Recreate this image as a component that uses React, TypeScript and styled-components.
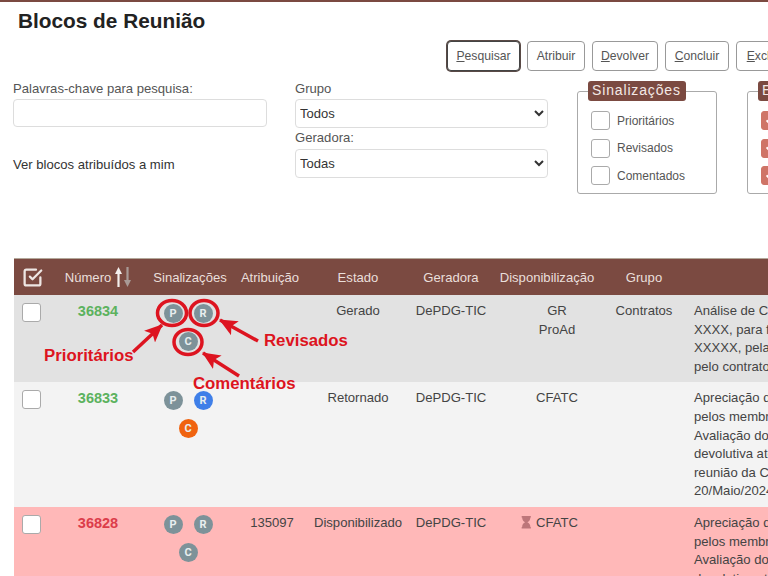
import styled, { createGlobalStyle } from "styled-components";
import { FiCheckSquare } from "react-icons/fi";
import { FaCheck, FaHourglass } from "react-icons/fa";

const brown = "#7b4a41";

const GlobalStyle = createGlobalStyle`
  html, body {
    margin: 0;
    height: 100%;
    overflow: hidden;
    background: #fff;
  }
  body {
    font-family: "Liberation Sans", Arial, sans-serif;
    font-size: 13.1px;
    color: #444;
  }
`;

const Page = styled.div`
  position: relative;
  width: 768px;
  height: 576px;
  overflow: hidden;
  border-top: 2px solid ${brown};
  box-sizing: border-box;
`;
const Title = styled.h1`
  margin: 0;
  padding: 7px 0 0 18px;
  height: 24px;
  font-size: 20.8px;
  line-height: 24px;
  font-weight: bold;
  color: #222;
`;
const Toolbar = styled.div`
  display: flex;
  gap: 7px;
  margin: 8px 0 10px 447px;
  height: 30px;
`;
const Button = styled.button<{ $active?: boolean; $w: number }>`
  flex: none;
  width: ${(p) => p.$w}px;
  height: 30px;
  padding: 0;
  font-family: inherit;
  font-size: 12.2px;
  color: #555;
  background: #fff;
  border: 1px solid ${(p) => (p.$active ? "#444" : "#999")};
  border-radius: 4px;
  box-shadow: ${(p) => (p.$active ? "0 0 0 1px #5a4a46" : "none")};

  u {
    text-decoration: underline;
  }
`;
const FormRow = styled.div`
  display: flex;
  padding-left: 13px;
  height: 113px;
`;
const LeftCol = styled.div`
  width: 254px;
  margin-right: 28px;
`;
const MidCol = styled.div`
  width: 253px;
  margin-right: 29px;
`;
const Label = styled.div`
  height: 16px;
  line-height: 16px;
  margin-bottom: 2px;
  color: #555;
`;
const GeraLabel = styled(Label)`
  margin: 2px 0 3px;
`;
const SearchInput = styled.input`
  display: block;
  width: 254px;
  height: 28px;
  box-sizing: border-box;
  border: 1px solid #ddd;
  border-radius: 4px;
  background: #fff;
`;
const MineLabel = styled.div`
  margin-top: 30px;
  line-height: 16px;
  color: #333;
`;
const Select = styled.select`
  display: block;
  width: 253px;
  height: 29px;
  box-sizing: border-box;
  padding: 0;
  font-family: inherit;
  font-size: 13px;
  color: #333;
  background: #fff;
  border: 1px solid #ddd;
  border-radius: 4px;
`;
const Group = styled.fieldset<{ $w: number }>`
  flex: none;
  box-sizing: border-box;
  width: ${(p) => p.$w}px;
  height: 113px;
  margin: 0 30px 0 0;
  padding: 10px 10px 0 13px;
  border: 1px solid #aaa;
  border-radius: 3px;

  legend {
    height: 20px;
    padding: 0 5px 0 4px;
    margin-left: -3px;
    line-height: 19px;
    font-size: 14px;
    letter-spacing: 0.85px;
    color: #f3e9e6;
    background: ${brown};
    border-radius: 3px;
  }
`;
const CheckRow = styled.div`
  display: flex;
  align-items: center;
  gap: 7px;
  box-sizing: border-box;
  height: 19px;
  margin-bottom: 8.5px;
  font-size: 12px;
  color: #555;
`;
const Box = styled.span<{ $on?: boolean }>`
  flex: none;
  display: flex;
  align-items: center;
  justify-content: center;
  width: 19px;
  height: 19px;
  box-sizing: border-box;
  color: #fff;
  font-size: 10px;
  border: 1px solid ${(p) => (p.$on ? "#cf7467" : "#aaa")};
  border-radius: 3px;
  background: ${(p) => (p.$on ? "#cf7467" : "#fff")};
`;
const Table = styled.table`
  table-layout: fixed;
  width: 1072px;
  margin: 64px 0 0 14px;
  border-collapse: separate;
  border-spacing: 0;
`;
const Th = styled.th<{ $w: number }>`
  width: ${(p) => p.$w}px;
  height: 36px;
  padding: 0;
  font-size: 13.1px;
  font-weight: normal;
  text-align: center;
  color: #eadfdb;
  background: ${brown};
  border-top: 1px solid #b3a89a;

  svg {
    vertical-align: middle;
  }
`;
const CheckAll = styled(FiCheckSquare)`
  stroke-width: 2.6;
  color: #eee6e3;
`;
const SortHead = styled.span`
  display: inline-flex;
  align-items: center;
  gap: 4px;
`;
const Tr = styled.tr<{ $bg: string }>`
  background: ${(p) => p.$bg};
`;
const Td = styled.td<{ $left?: boolean }>`
  padding: ${(p) => (p.$left ? "7px 0 6px 8px" : "7px 0 6px")};
  vertical-align: top;
  line-height: 18.6px;
  text-align: ${(p) => (p.$left ? "left" : "center")};
  white-space: nowrap;
  color: #444;
`;
const RowCheck = styled(Box)`
  margin-top: 1px;
  border-color: #aaa;
  background: #fff;
`;
const Num = styled.span<{ $red?: boolean }>`
  font-size: 14.5px;
  font-weight: bold;
  color: ${(p) => (p.$red ? "#dc3d4a" : "#5cb25e")};
`;
const Attr = styled.span`
  margin-left: 4px;
`;
const Badges = styled.div`
  display: flex;
  flex-wrap: wrap;
  justify-content: center;
  width: 60px;
  margin: 1.5px 0 0 12px;
  gap: 9px 11px;
`;
const Badge = styled.span<{ $color?: string }>`
  display: flex;
  align-items: center;
  justify-content: center;
  width: 19px;
  height: 19px;
  border-radius: 50%;
  font-family: Roboto, "Liberation Sans", sans-serif;
  font-size: 11px;
  line-height: 1;
  font-weight: bold;
  color: #e8eeee;
  background: ${(p) => p.$color ?? "#7d9299"};
`;
const Disp = styled.div`
  display: flex;
  justify-content: center;
`;
const Slot = styled.span`
  flex: none;
  box-sizing: border-box;
  width: 20px;
  padding: 2px 0 0 4px;
  font-size: 12.5px;
  color: #bd767a;
  text-align: left;
`;
const Overlay = styled.svg`
  position: absolute;
  left: 0;
  top: -2px;
  pointer-events: none;
`;
const Note = styled.span<{ $x: number; $y: number }>`
  position: absolute;
  left: ${(p) => p.$x}px;
  top: ${(p) => p.$y}px;
  font-size: 16.8px;
  line-height: 18px;
  font-weight: bold;
  color: #dd1420;
`;

function Row(props: {
  bg: string;
  num: string;
  red?: boolean;
  badges: [string?, string?, string?];
  attr?: string;
  state: string;
  disp: string[];
  wait?: boolean;
  group?: string;
  lines: string[];
}) {
  const [p, r, c] = props.badges;
  return (
    <Tr $bg={props.bg}>
      <Td $left>
        <RowCheck />
      </Td>
      <Td>
        <Num $red={props.red}>{props.num}</Num>
      </Td>
      <Td>
        <Badges>
          <Badge $color={p}>P</Badge>
          <Badge $color={r}>R</Badge>
          <Badge $color={c}>C</Badge>
        </Badges>
      </Td>
      <Td>{props.attr && <Attr>{props.attr}</Attr>}</Td>
      <Td>{props.state}</Td>
      <Td>DePDG-TIC</Td>
      <Td>
        <Disp>
          <Slot>{props.wait && <FaHourglass />}</Slot>
          <div>
            {props.disp.map((d) => (
              <div key={d}>{d}</div>
            ))}
          </div>
        </Disp>
      </Td>
      <Td>{props.group}</Td>
      <Td $left>
        {props.lines.map((l) => (
          <div key={l}>{l}</div>
        ))}
      </Td>
    </Tr>
  );
}

export default function App() {
  return (
    <Page>
      <GlobalStyle />
      <Title>Blocos de Reunião</Title>
      <Toolbar>
        <Button $w={73} $active>
          <u>P</u>esquisar
        </Button>
        <Button $w={58}>Atribuir</Button>
        <Button $w={66}>
          <u>D</u>evolver
        </Button>
        <Button $w={64}>
          <u>C</u>oncluir
        </Button>
        <Button $w={58}>
          <u>E</u>xcluir
        </Button>
      </Toolbar>
      <FormRow>
        <LeftCol>
          <Label>Palavras-chave para pesquisa:</Label>
          <SearchInput />
          <MineLabel>Ver blocos atribuídos a mim</MineLabel>
        </LeftCol>
        <MidCol>
          <Label>Grupo</Label>
          <Select defaultValue="Todos">
            <option>Todos</option>
          </Select>
          <GeraLabel>Geradora:</GeraLabel>
          <Select defaultValue="Todas">
            <option>Todas</option>
          </Select>
        </MidCol>
        <Group $w={140}>
          <legend>Sinalizações</legend>
          <CheckRow>
            <Box />
            Prioritários
          </CheckRow>
          <CheckRow>
            <Box />
            Revisados
          </CheckRow>
          <CheckRow>
            <Box />
            Comentados
          </CheckRow>
        </Group>
        <Group $w={140}>
          <legend>Estado</legend>
          <CheckRow>
            <Box $on>
              <FaCheck />
            </Box>
            Gerado
          </CheckRow>
          <CheckRow>
            <Box $on>
              <FaCheck />
            </Box>
            Retornado
          </CheckRow>
          <CheckRow>
            <Box $on>
              <FaCheck />
            </Box>
            Disponibilizado
          </CheckRow>
        </Group>
      </FormRow>
      <Table>
        <thead>
          <tr>
            <Th $w={36}>
              <CheckAll size={21} />
            </Th>
            <Th $w={96}>
              <SortHead>
                Número
                <svg width="16" height="20" viewBox="0 0 16 20" fill="none">
                  <path d="M3.5 20V6" stroke="#f4efed" strokeWidth="2.2" />
                  <path d="M3.5 0L7 7H0Z" fill="#f4efed" />
                  <path d="M12.5 0V14" stroke="#a99a96" strokeWidth="2.2" />
                  <path d="M12.5 20L16 13H9Z" fill="#a99a96" />
                </svg>
              </SortHead>
            </Th>
            <Th $w={88}>Sinalizações</Th>
            <Th $w={72}>Atribuição</Th>
            <Th $w={104}>Estado</Th>
            <Th $w={82}>Geradora</Th>
            <Th $w={110}>Disponibilização</Th>
            <Th $w={84}>Grupo</Th>
            <Th $w={400} />
          </tr>
        </thead>
        <tbody>
          <Row
            bg="#e2e2e2"
            num="36834"
            badges={[]}
            state="Gerado"
            disp={["GR", "ProAd"]}
            group="Contratos"
            lines={[
              "Análise de Contratação",
              "XXXX, para fornecimento",
              "XXXXX, pela empresa",
              "pelo contrato vigente",
            ]}
          />
          <Row
            bg="#f3f3f3"
            num="36833"
            badges={[undefined, "#3f7fe8", "#f0630f"]}
            state="Retornado"
            disp={["CFATC"]}
            lines={[
              "Apreciação do documento",
              "pelos membros do comitê.",
              "Avaliação do conteúdo e",
              "devolutiva até a próxima",
              "reunião da Comissão em",
              "20/Maio/2024",
            ]}
          />
          <Row
            bg="#ffb8b8"
            num="36828"
            red
            badges={[]}
            attr="135097"
            state="Disponibilizado"
            disp={["CFATC"]}
            wait
            lines={[
              "Apreciação do documento",
              "pelos membros do comitê.",
              "Avaliação do conteúdo e",
              "devolutiva até a próxima",
            ]}
          />
        </tbody>
      </Table>

      <Overlay width="768" height="576" viewBox="0 0 768 576" fill="none">
        <defs>
          <marker
            id="head"
            markerUnits="userSpaceOnUse"
            markerWidth="20"
            markerHeight="16"
            refX="17"
            refY="8"
            orient="auto"
          >
            <path d="M0 0 L18 8 L0 16 L4 8 Z" fill="#dd1420" />
          </marker>
        </defs>
        <g stroke="#dd1420" strokeWidth="3.5">
          <ellipse cx="172" cy="313" rx="14.5" ry="12.5" />
          <ellipse cx="204" cy="313" rx="14" ry="12.5" />
          <ellipse cx="188" cy="342" rx="14" ry="12.5" />
          <line x1="133" y1="352" x2="162" y2="325" markerEnd="url(#head)" />
          <line x1="258" y1="341" x2="220" y2="320" markerEnd="url(#head)" />
          <line x1="239" y1="376" x2="203" y2="353" markerEnd="url(#head)" />
        </g>
      </Overlay>
      <Note $x={44} $y={345}>
        Prioritários
      </Note>
      <Note $x={264} $y={330}>
        Revisados
      </Note>
      <Note $x={193} $y={373}>
        Comentários
      </Note>
    </Page>
  );
}
